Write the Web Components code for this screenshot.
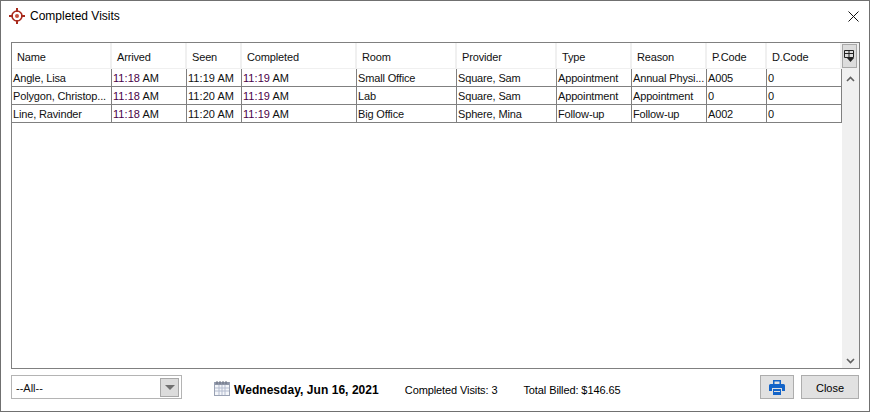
<!DOCTYPE html>
<html>
<head>
<meta charset="utf-8">
<title>Completed Visits</title>
<style>
    html, body { margin: 0; padding: 0; background: #fff; }
    body { font-family: "Liberation Sans", Arial, sans-serif; font-size: 11px; color: #000; }
</style>
</head>
<body>
<visits-window>
    <title-bar slot="title">Completed Visits</title-bar>
    <visits-table slot="table"></visits-table>
    <visits-footer slot="footer"></visits-footer>
</visits-window>

<script>
const COLUMNS = [
    { label: 'Name', width: 100 },
    { label: 'Arrived', width: 75 },
    { label: 'Seen', width: 55 },
    { label: 'Completed', width: 115, sorted: true },
    { label: 'Room', width: 100 },
    { label: 'Provider', width: 100 },
    { label: 'Type', width: 75 },
    { label: 'Reason', width: 75 },
    { label: 'P.Code', width: 60 },
    { label: 'D.Code', width: 75 }
];

const VISITS = [
    ['Angle, Lisa', '11:18 AM', '11:19 AM', '11:19 AM', 'Small Office', 'Square, Sam', 'Appointment', 'Annual Physi...', 'A005', '0'],
    ['Polygon, Christop...', '11:18 AM', '11:20 AM', '11:19 AM', 'Lab', 'Square, Sam', 'Appointment', 'Appointment', '0', '0'],
    ['Line, Ravinder', '11:18 AM', '11:20 AM', '11:19 AM', 'Big Office', 'Sphere, Mina', 'Follow-up', 'Follow-up', 'A002', '0']
];

const gridColumns = COLUMNS.map(c => c.width + 'px').join(' ');

class VisitsWindow extends HTMLElement {
    constructor() {
        super();
        this.attachShadow({ mode: 'open' });
        this.shadowRoot.innerHTML = `
            <style>
                :host {
                    display: flex;
                    flex-direction: column;
                    box-sizing: border-box;
                    width: 870px;
                    height: 412px;
                    background: #fff;
                    border: 1px solid #707070;
                }
            </style>
            <slot name="title"></slot>
            <slot name="table"></slot>
            <slot name="footer"></slot>
        `;
    }
}
customElements.define('visits-window', VisitsWindow);

class TitleBar extends HTMLElement {
    constructor() {
        super();
        this.attachShadow({ mode: 'open' });
        this.shadowRoot.innerHTML = `
            <style>
                :host {
                    display: flex;
                    align-items: center;
                    height: 30px;
                    padding: 0 10px 0 8px;
                    font-size: 12px;
                    color: #000;
                }
                svg { flex-shrink: 0; }
                .text { margin-left: 5px; flex: 1; }
            </style>
            <svg width="16" height="16" viewBox="0 0 16 16">
                <circle cx="8" cy="8" r="5" fill="none" stroke="#a82a1c" stroke-width="1.6"/>
                <circle cx="8" cy="8" r="2" fill="#c8503c"/>
                <path d="M8 0v4M8 12v4M0 8h4M12 8h4" stroke="#a82a1c" stroke-width="2"/>
            </svg>
            <span class="text"><slot></slot></span>
            <svg width="11" height="11" viewBox="0 0 11 11">
                <path d="M.5.5l10 10M10.5.5l-10 10" stroke="#111" stroke-width="1" fill="none"/>
            </svg>
        `;
    }
}
customElements.define('title-bar', TitleBar);

class HeaderCell extends HTMLElement {
    constructor() {
        super();
        this.attachShadow({ mode: 'open' });
        this.shadowRoot.innerHTML = `
            <style>
                :host {
                    display: flex;
                    align-items: center;
                    position: relative;
                    box-sizing: border-box;
                    height: 26px;
                    padding: 2px 0 0 5px;
                    border-right: 2px solid #f0f0f0;
                    border-bottom: 1px solid #f0f0f0;
                    color: #111;
                    letter-spacing: -0.15px;
                }
                svg { position: absolute; right: 11px; top: 11px; }
            </style>
            <slot></slot>
            ${this.hasAttribute('sorted') ? '<svg width="5" height="6" viewBox="0 0 5 6"><path d="M1 5.5L3.5.5" stroke="#666" fill="none"/></svg>' : ''}
        `;
    }
}
customElements.define('header-cell', HeaderCell);

class VisitRow extends HTMLElement {
    constructor() {
        super();
        this.attachShadow({ mode: 'open' });
    }

    configure(values) {
        const cells = values.map((v, i) => {
            if (i >= 1 && i <= 3) {
                // arrived and completed have the purple time part, seen stays black
                const [time, ampm] = v.split(' ');
                const cls = i === 2 ? '' : 'mark';
                return `<div class="cell time"><span class="${cls}">${time}</span> ${ampm}</div>`;
            }
            return `<div class="cell">${v}</div>`;
        }).join('');
        this.shadowRoot.innerHTML = `
            <style>
                :host {
                    display: grid;
                    grid-template-columns: ${gridColumns};
                    height: 18px;
                    box-sizing: border-box;
                    border-bottom: 1px solid #808080;
                }
                .cell {
                    box-sizing: border-box;
                    padding: 2px 0 0 1px;
                    border-right: 1px solid #808080;
                    white-space: nowrap;
                    overflow: hidden;
                    line-height: 15px;
                    letter-spacing: -0.15px;
                    color: #111;
                }
                .time { letter-spacing: 0.05px; }
                .mark { color: #4a0048; }
            </style>
            ${cells}
        `;
    }
}
customElements.define('visit-row', VisitRow);

class VisitsTable extends HTMLElement {
    constructor() {
        super();
        this.attachShadow({ mode: 'open' });
        this.shadowRoot.innerHTML = `
            <style>
                :host {
                    display: flex;
                    box-sizing: border-box;
                    width: 849px;
                    height: 327px;
                    margin: 11px 0 0 10px;
                    border: 1px solid #808080;
                    background: #fff;
                }
                .body { width: 830px; flex-shrink: 0; }
                .head { display: grid; grid-template-columns: ${gridColumns}; }
                .bar {
                    flex: 1;
                    display: flex;
                    flex-direction: column;
                    align-items: center;
                    background: #f0f0f0;
                }
                .menu {
                    align-self: flex-start;
                    box-sizing: border-box;
                    width: 15px;
                    height: 24px;
                    margin-top: 1px;
                    background: #dcdcdc;
                    border: 1px solid #a8a8a8;
                    display: flex;
                    align-items: center;
                    justify-content: center;
                }
                .up { margin-top: 8px; }
                .down { margin-top: auto; margin-bottom: 4px; }
            </style>
            <div class="body">
                <div class="head" id="head"></div>
                <div id="rows"></div>
            </div>
            <div class="bar">
                <div class="menu">
                    <svg width="11" height="13" viewBox="0 0 11 13">
                        <path d="M.5.5h9v7h-9zM.5 3.500h9M5 .5v7" fill="none" stroke="#222"/>
                        <path d="M3 8h7l-3.500 4z" fill="#222"/>
                    </svg>
                </div>
                <svg class="up" width="9" height="6" viewBox="0 0 9 6"><path d="M1 5l3.500-3.500L8 5" fill="none" stroke="#606060" stroke-width="1.600"/></svg>
                <svg class="down" width="9" height="6" viewBox="0 0 9 6"><path d="M1 1l3.500 3.500L8 1" fill="none" stroke="#606060" stroke-width="1.600"/></svg>
            </div>
        `;
    }

    connectedCallback() {
        const head = this.shadowRoot.getElementById('head');
        COLUMNS.forEach(c => {
            const cell = document.createElement('header-cell');
            if (c.sorted) cell.setAttribute('sorted', '');
            cell.textContent = c.label;
            head.appendChild(cell);
        });
        const rows = this.shadowRoot.getElementById('rows');
        VISITS.forEach(v => {
            const row = document.createElement('visit-row');
            row.configure(v);
            rows.appendChild(row);
        });
    }
}
customElements.define('visits-table', VisitsTable);

class ComboBox extends HTMLElement {
    constructor() {
        super();
        this.attachShadow({ mode: 'open' });
        this.shadowRoot.innerHTML = `
            <style>
                :host {
                    display: flex;
                    align-items: center;
                    box-sizing: border-box;
                    width: 171px;
                    height: 24px;
                    padding: 0 2px 0 4px;
                    border: 1px solid #b4b4b4;
                    font-size: 11px;
                    color: #111;
                }
                .text { flex: 1; padding-top: 2px; }
                .arrow {
                    box-sizing: border-box;
                    width: 19px;
                    height: 19px;
                    background: #dcdcdc;
                    border: 1px solid #a8a8a8;
                    display: flex;
                    align-items: center;
                    justify-content: center;
                }
                .arrow i {
                    width: 0;
                    height: 0;
                    border: 5px solid transparent;
                    border-top: 5px solid #707070;
                    border-bottom: 0;
                }
            </style>
            <span class="text"><slot></slot></span>
            <span class="arrow"><i></i></span>
        `;
    }
}
customElements.define('combo-box', ComboBox);

class PushButton extends HTMLElement {
    constructor() {
        super();
        this.attachShadow({ mode: 'open' });
        this.shadowRoot.innerHTML = `
            <style>
                :host {
                    display: flex;
                    align-items: center;
                    justify-content: center;
                    box-sizing: border-box;
                    height: 24px;
                    background: #e1e1e1;
                    border: 1px solid #adadad;
                    color: #000;
                    font-size: 11px;
                }
            </style>
            <slot></slot>
        `;
    }
}
customElements.define('push-button', PushButton);

class VisitsFooter extends HTMLElement {
    constructor() {
        super();
        this.attachShadow({ mode: 'open' });
        this.shadowRoot.innerHTML = `
            <style>
                :host {
                    display: flex;
                    align-items: center;
                    height: 24px;
                    margin: 6px 10px 0 10px;
                    color: #000;
                }
                .cal { margin: 2px 0 0 32px; }
                .date, .count, .billed { padding-top: 6px; }
                .date { margin-left: 4px; font-size: 12px; font-weight: bold; letter-spacing: 0.05px; }
                .count { margin-left: 26px; letter-spacing: -0.1px; }
                .billed { margin-left: 26px; letter-spacing: -0.1px; }
                .print { width: 34px; margin-left: auto; }
                .close { width: 58px; margin-left: 7px; padding-top: 1px; }
            </style>
            <combo-box>--All--</combo-box>
            <svg class="cal" width="16" height="16" viewBox="0 0 16 16">
                <rect x=".5" y="2.500" width="15" height="13" fill="#f4f6fa" stroke="#9aa2b4"/>
                <rect x="1" y="2" width="14" height="3" fill="#8f97a8"/>
                <path d="M3 1v3M6 1v3M9 1v3M12 1v3" stroke="#6a7080"/>
                <path d="M1 8h14M1 11h14M5 5v10M8 5v10M11 5v10" stroke="#b4bccf"/>
            </svg>
            <span class="date">Wednesday, Jun 16, 2021</span>
            <span class="count">Completed Visits: 3</span>
            <span class="billed">Total Billed: $146.65</span>
            <push-button class="print">
                <svg width="16" height="15" viewBox="0 0 16 15">
                    <path d="M4.750.750h6.500v4h-6.500z" fill="none" stroke="#1464c8" stroke-width="1.500"/>
                    <path d="M1.500 4h13a1.500 1.500 0 0 1 1.500 1.500V11h-3V8H3v3H0V5.500A1.500 1.500 0 0 1 1.500 4z" fill="#1464c8"/>
                    <path d="M4 9h8v6H4z" fill="#1464c8"/>
                    <path d="M5 11h6v1H5z" fill="#e1e1e1"/>
                </svg>
            </push-button>
            <push-button class="close">Close</push-button>
        `;
    }
}
customElements.define('visits-footer', VisitsFooter);
</script>
</body>
</html>
